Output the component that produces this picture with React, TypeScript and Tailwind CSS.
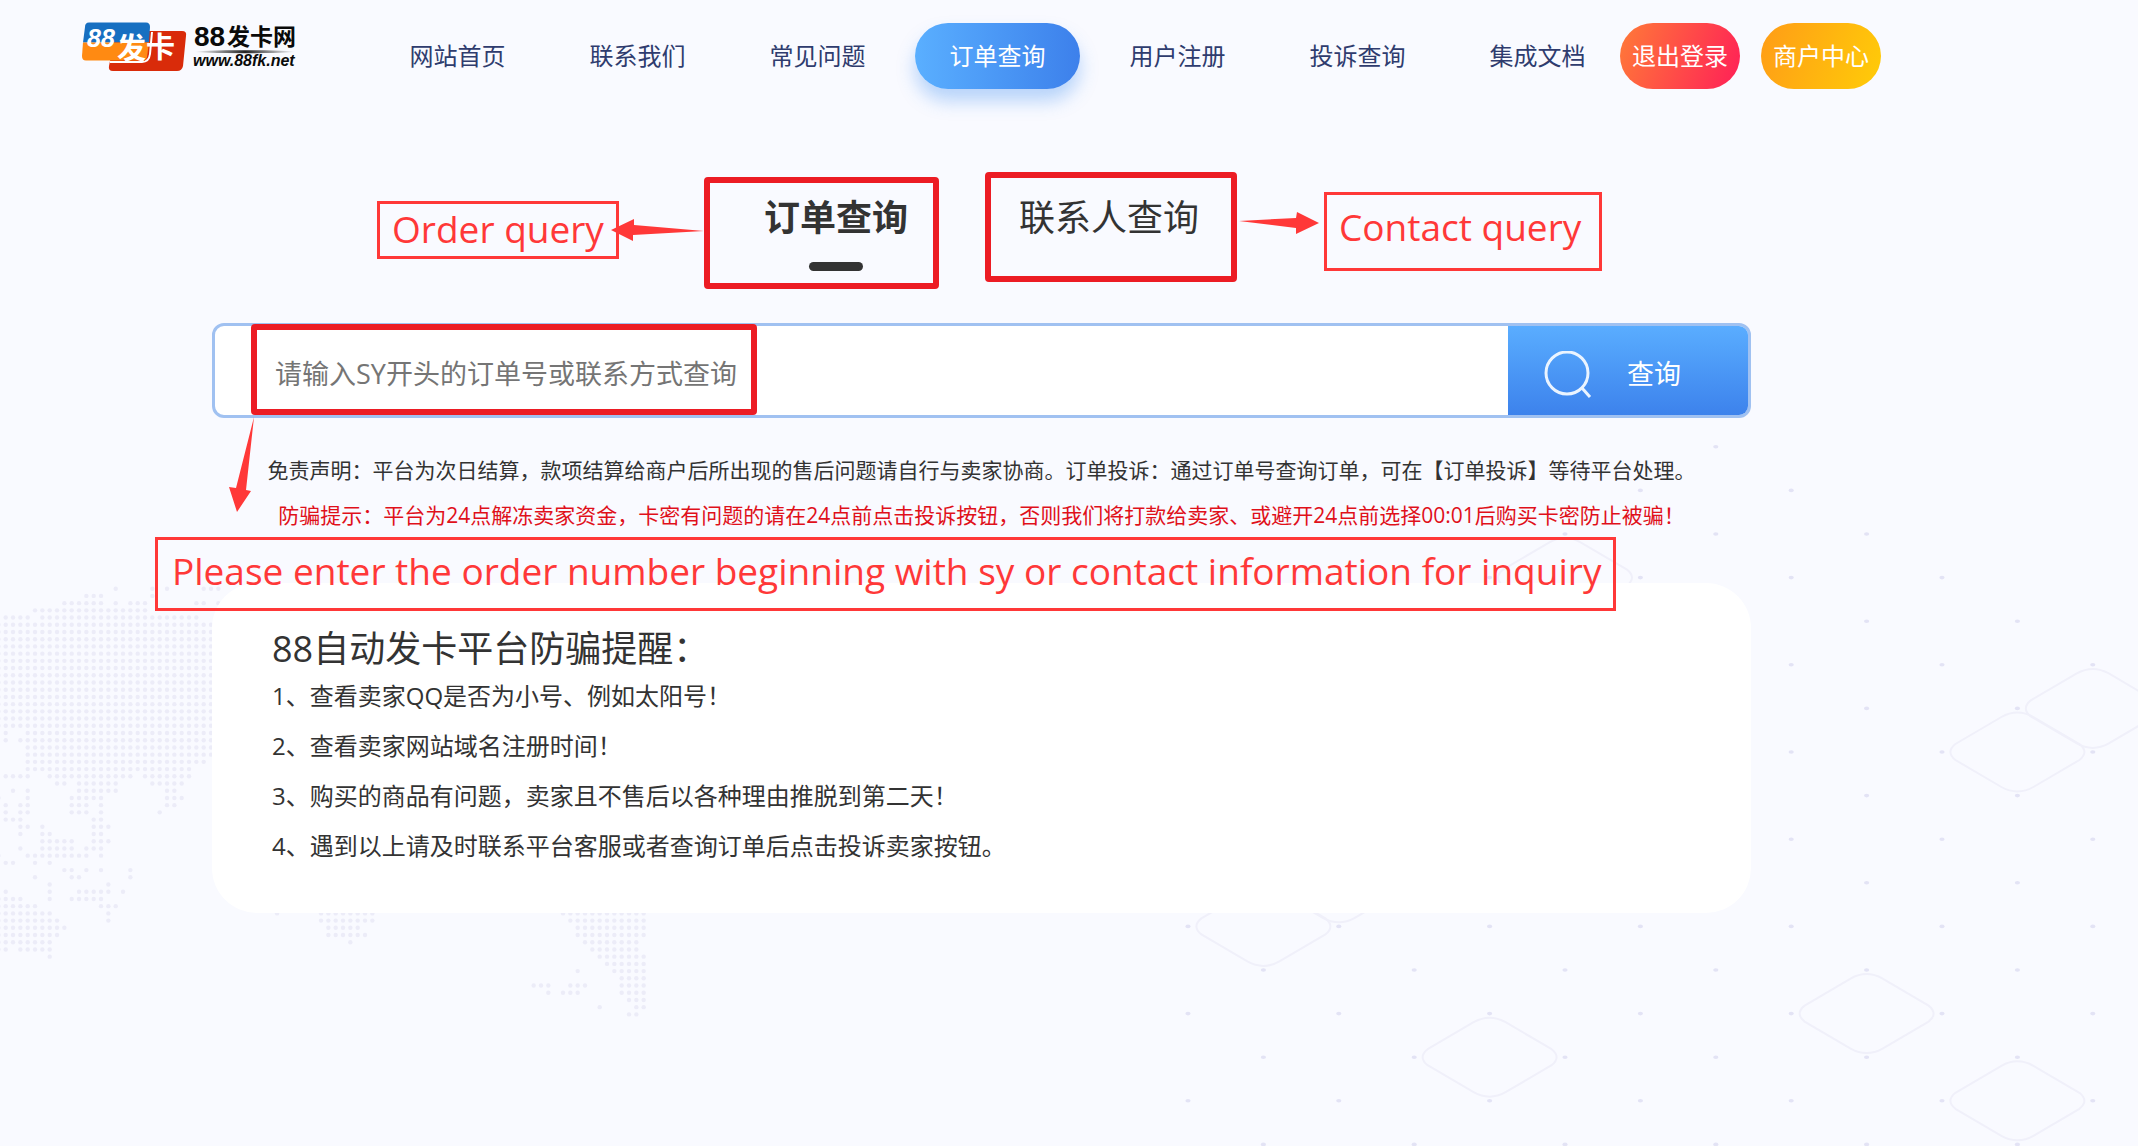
import { useState } from 'react';

const navItems = ['网站首页', '联系我们', '常见问题', '订单查询', '用户注册', '投诉查询', '集成文档'];

const tips = [
  '1、查看卖家QQ是否为小号、例如太阳号！',
  '2、查看卖家网站域名注册时间！',
  '3、购买的商品有问题，卖家且不售后以各种理由推脱到第二天！',
  '4、遇到以上请及时联系平台客服或者查询订单后点击投诉卖家按钮。',
];

// dotted world map: one entry per row, each pair is a [from, to] run of columns
const mapRows: number[][][] = [
  [[16, 16], [21, 21], [23, 23], [28, 30]],
  [[12, 14], [21, 21]],
  [[9, 14], [16, 16], [18, 20], [27, 28], [30, 30]],
  [[5, 20]],
  [[1, 4], [6, 27]],
  ...Array.from({ length: 15 }, () => [[0, 29]]),
  [[1, 1], [4, 29]],
  [[1, 1], [3, 29]],
  [[4, 29]],
  [[4, 29]],
  [[4, 28]],
  [[4, 26]],
  [[1, 4], [7, 18], [20, 26]],
  [[8, 9], [11, 16], [21, 25]],
  [[2, 2], [4, 4], [11, 16], [23, 24]],
  [[0, 0], [4, 4], [10, 14], [23, 25]],
  [[1, 1], [3, 4], [10, 12], [14, 14], [23, 24]],
  [[1, 1], [3, 4], [10, 12], [14, 14], [22, 22]],
  [[1, 3], [13, 14]],
  [[3, 4], [6, 6], [13, 15]],
  [[3, 3], [6, 7], [13, 14]],
  [[6, 10], [13, 15]],
  [[3, 3], [6, 10], [12, 14]],
  [[0, 0], [4, 12], [14, 14]],
  [[1, 2], [5, 5], [7, 7]],
  [[9, 10], [12, 12], [14, 14], [18, 18]],
  [[5, 5], [10, 11], [18, 18]],
  [[7, 7], [15, 15]],
  [[1, 1], [7, 7], [11, 15], [17, 17]],
  [[0, 3], [7, 7], [10, 14]],
  [[0, 5], [14, 16]],
  [[0, 7], [15, 15], [38, 38], [44, 51], [77, 88]],
  [[0, 8], [15, 15], [44, 51], [78, 88]],
  [[0, 9], [45, 49], [79, 88]],
  [[0, 8], [45, 50], [79, 88]],
  [[0, 7], [48, 48], [80, 87]],
  [[0, 1], [3, 7], [81, 87]],
  [[7, 7], [82, 88]],
  [[83, 88]],
  [[79, 79], [84, 88]],
  [[85, 88]],
  [[73, 75], [78, 80], [85, 88]],
  [[75, 75], [77, 79], [85, 88]],
  [[86, 88]],
  [[82, 82], [87, 88]],
  [[86, 87]],
];

const diamonds = [
  [-2, 3], [5, 6], [4, 7], [-5, 10], [-6, 11], [2, 13], [-3, 14], [4, 15],
];

function WorldMap() {
  return (
    <svg className="absolute left-0 top-[575px] h-[460px] w-[660px]" fill="#ececf8" aria-hidden="true">
      {mapRows.map((runs, r) =>
        runs.map(([from, to]) =>
          Array.from({ length: to - from + 1 }, (_, i) => (
            <circle key={`${r}-${from + i}`} cx={5.7 + 7.333 * (from + i - 1)} cy={13.7 + 7.215 * r} r={2.2} />
          ))
        )
      )}
    </svg>
  );
}

function Lattice() {
  const dots: number[][] = [];
  for (let row = 0; row <= 16; row++) {
    for (let col = -row; col <= row; col += 2) {
      if (col >= -7 && col <= 5) dots.push([col, row]);
    }
  }

  return (
    <svg className="absolute right-0 top-[430px] h-[716px] w-[960px]" aria-hidden="true">
      {dots.map(([col, row]) => (
        <ellipse key={`${col}-${row}`} cx={537.8 + 75.4 * col} cy={16.8 + 43.6 * row} rx={2.6} ry={1.8} fill="#e3e3f5" />
      ))}
      {diamonds.map(([col, row]) => (
        <path
          key={`${col}-${row}`}
          transform={`translate(${537.8 + 75.4 * col} ${16.8 + 43.6 * row})`}
          d="M-62-8L-16-35Q0-44 16-35L62-8Q72 0 62 8L16 35Q0 44-16 35L-62 8Q-72 0-62-8Z"
          fill="none"
          stroke="#f0f0fa"
          strokeWidth="2"
        />
      ))}
    </svg>
  );
}

function Logo() {
  return (
    <svg className="h-[72px] w-[220px] shrink-0" viewBox="0 0 220 72" role="img" aria-label="88发卡网">
      <defs>
        <linearGradient id="logo-rule">
          <stop offset="0" stopColor="#222" stopOpacity="0" />
          <stop offset="0.5" stopColor="#222" />
          <stop offset="1" stopColor="#222" stopOpacity="0" />
        </linearGradient>
      </defs>
      <path d="M36 11H102Q107 11 106 16L103 46Q102 51 97 51H33Q28 51 29 46Z" fill="#d92b0a" />
      <path d="M9 2.500H66Q70 2.500 70 7L69 22.500H3L5 7Q5 2.500 9 2.500Z" fill="#176fc1" />
      <path d="M3 22.500H69L67 37Q66 40.500 62 40.500H6Q2 40.500 2 36Z" fill="#ff8a12" />
      <path d="M30 42H62Q69 42 70 34L72 12" fill="none" stroke="#fff" strokeWidth="2" />
      <g fill="#fff" fontWeight="700" fontFamily="'Liberation Sans','Noto Sans CJK SC',sans-serif">
        <text x="7" y="27" fontSize="25" fontStyle="italic">88</text>
        <text x="37" y="39" fontSize="29">发</text>
        <text x="66" y="38" fontSize="29">卡</text>
      </g>
      <g fill="#0a0a0a" fontWeight="700" fontFamily="'Liberation Sans','Noto Sans CJK SC',sans-serif">
        <text x="114" y="26" fontSize="28">88</text>
        <text x="147" y="25" fontSize="23">发卡网</text>
        <text x="113" y="46" fontSize="16" fontStyle="italic">www.88fk.net</text>
      </g>
      <ellipse cx="165" cy="31.700" rx="50" ry="1.500" fill="url(#logo-rule)" />
    </svg>
  );
}

function SearchIcon() {
  return (
    <svg className="size-12" viewBox="0 0 48 48" fill="none" stroke="#eaf4ff" strokeWidth="3" aria-hidden="true">
      <circle cx="23" cy="22" r="21" />
      <path d="M38 37L46 46" />
    </svg>
  );
}

export default function App() {
  const [tab, setTab] = useState<'order' | 'contact'>('order');
  const [keyword, setKeyword] = useState('');

  return (
    <div className="relative min-h-screen overflow-hidden bg-[#f9faff] font-['Open_Sans','Noto_Sans_CJK_SC',sans-serif] text-[#333]">
      <WorldMap />
      <Lattice />

      <header className="relative flex items-center pl-20 pt-5">
        <Logo />
        <nav className="ml-[75px] flex gap-[15px] text-2xl">
          {navItems.map(item => (
            <a
              key={item}
              href="#"
              aria-current={item === '订单查询' ? 'page' : undefined}
              className={
                item === '订单查询'
                  ? 'flex h-[66px] w-[165px] items-center justify-center rounded-full bg-linear-to-r from-[#5aafff] to-[#3d80eb] text-white shadow-[0_12px_18px_rgba(61,140,240,0.35)]'
                  : 'flex h-[66px] w-[165px] items-center justify-center text-[#2f3c6e]'
              }
            >
              {item}
            </a>
          ))}
        </nav>
        <div className="flex gap-[21px] text-2xl text-white">
          <button type="button" className="h-[66px] w-[120px] rounded-full bg-linear-[110deg] from-[#ff7a38] to-[#ff1f57]">
            退出登录
          </button>
          <button type="button" className="h-[66px] w-[120px] rounded-full bg-linear-[110deg] from-[#ff9c17] to-[#ffcc08]">
            商户中心
          </button>
        </div>
      </header>

      <main className="relative ml-[212px] mr-[387px]">
        <div role="tablist" className="flex items-start justify-center gap-[111px] pt-[99px] text-4xl/[54px]">
          <div className="relative">
            <button
              type="button"
              role="tab"
              aria-selected={tab === 'order'}
              onClick={() => setTab('order')}
              className="flex flex-col items-center gap-[17px]"
            >
              <span className={tab === 'order' ? 'font-bold' : ''}>订单查询</span>
              <span className={tab === 'order' ? 'h-[9px] w-[54px] rounded-full bg-[#333]' : 'h-[9px] w-[54px]'} />
            </button>
            <div className="pointer-events-none absolute -left-[60px] -top-[14px] h-[112px] w-[235px] rounded-sm border-6 border-[#ec1c24]" />
            <svg className="absolute -left-[153px] top-[27px] h-6 w-[94px]" viewBox="0 0 94 24" fill="#ff3838" aria-hidden="true">
              <path d="M0 12L23 1V7L93 13L22 17V23Z" />
            </svg>
            <p className="absolute -left-[387px] top-[10px] flex h-[58px] w-[242px] justify-center whitespace-nowrap border-3 border-[#ff3838] text-[37px]/[50px] text-[#ff3838]">
              Order query
            </p>
          </div>

          <div className="relative">
            <button
              type="button"
              role="tab"
              aria-selected={tab === 'contact'}
              onClick={() => setTab('contact')}
              className="flex flex-col items-center gap-[17px]"
            >
              <span className={tab === 'contact' ? 'font-bold' : ''}>联系人查询</span>
              <span className={tab === 'contact' ? 'h-[9px] w-[54px] rounded-full bg-[#333]' : 'h-[9px] w-[54px]'} />
            </button>
            <div className="pointer-events-none absolute -left-[34px] -top-[19px] h-[110px] w-[252px] rounded-sm border-6 border-[#ec1c24]" />
            <svg className="absolute left-[220px] top-5 h-6 w-20" viewBox="0 0 80 24" fill="#ff3838" aria-hidden="true">
              <path d="M0 10L57 7L58 1L80 12L57 23V17Z" />
            </svg>
            <p className="absolute left-[305px] top-px h-[79px] w-[278px] whitespace-nowrap border-3 border-[#ff3838] pl-3 pt-[7px] text-[37px]/[50px] text-[#ff3838]">
              Contact query
            </p>
          </div>
        </div>

        <div className="relative mt-[52px]">
          <form
            onSubmit={e => e.preventDefault()}
            className="flex h-[95px] overflow-hidden rounded-xl border-3 border-[#a0c1f1] bg-white"
          >
            <input
              type="text"
              aria-label="订单号或联系方式"
              value={keyword}
              onChange={e => setKeyword(e.target.value)}
              placeholder="请输入SY开头的订单号或联系方式查询"
              className="min-w-0 flex-1 pl-[60px] pt-2 text-[27px] outline-none placeholder:text-[#757575]"
            />
            <button
              type="submit"
              className="flex w-60 items-center gap-[35px] bg-linear-to-b from-[#5aadff] to-[#3d82ec] pl-9 pt-2 text-[27px] text-white"
            >
              <SearchIcon />
              查询
            </button>
          </form>
          <div className="pointer-events-none absolute left-[39px] top-px h-[91px] w-[506px] rounded-sm border-6 border-[#ec1c24]" />
          <svg className="absolute left-4 top-[94px] h-[98px] w-7" viewBox="0 0 28 98" fill="#ff3838" aria-hidden="true">
            <path d="M26 0L18 73L23 74L9 95L1 70L8 71Z" />
          </svg>
        </div>

        <div className="mt-[30px] whitespace-nowrap text-center text-[21px]/[45px]">
          <p>
            免责声明：平台为次日结算，款项结算给商户后所出现的售后问题请自行与卖家协商。订单投诉：通过订单号查询订单，可在【订单投诉】等待平台处理。
          </p>
          <p className="text-[#e0101a]">
            防骗提示：平台为24点解冻卖家资金，卡密有问题的请在24点前点击投诉按钮，否则我们将打款给卖家、或避开24点前选择00:01后购买卡密防止被骗！
          </p>
        </div>

        <section className="relative mt-[45px] rounded-[45px] bg-white px-[60px] pb-[42px] pt-11">
          <h2 className="text-4xl/[44px]">88自动发卡平台防骗提醒：</h2>
          <ol className="text-2xl/[50px]">
            {tips.map(tip => (
              <li key={tip}>{tip}</li>
            ))}
          </ol>
          <p className="absolute -left-[57px] -top-[46px] h-[74px] w-[1461px] whitespace-nowrap border-3 border-[#ff3838] pl-[14px] pt-[6px] text-[37px]/[50px] text-[#ff3838]">
            Please enter the order number beginning with sy or contact information for inquiry
          </p>
        </section>
      </main>
    </div>
  );
}
